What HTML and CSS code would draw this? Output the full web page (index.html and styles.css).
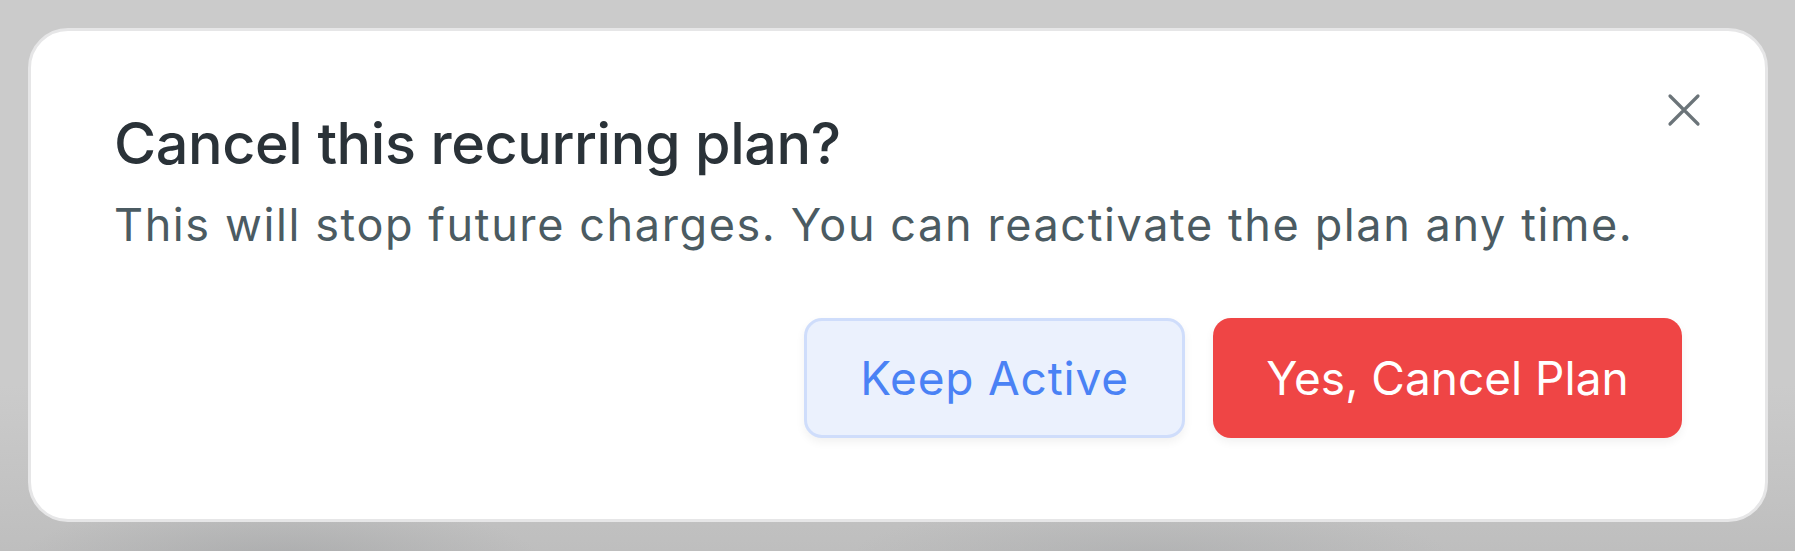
FILE: index.html
```html
<!DOCTYPE html>
<html lang="en">
<head>
    <meta charset="UTF-8">
    <meta name="viewport" content="width=device-width, initial-scale=1.0">
    <title>Cancel plan</title>
    <link rel="stylesheet" href="styles.css">
</head>
<body>
    <div class="backdrop">
        <div class="dialog" role="dialog" aria-labelledby="dialogTitle">
            <button class="close-button" aria-label="Close">
                <svg width="34" height="34" viewBox="0 0 34 34" fill="none">
                    <path d="M3 3 L31 31 M31 3 L3 31" stroke="currentColor" stroke-width="3.2" stroke-linecap="round"/>
                </svg>
            </button>

            <h2 class="dialog-title" id="dialogTitle">Cancel this recurring plan?</h2>
            <p class="dialog-text">This will stop future charges. You can reactivate the plan any time.</p>

            <div class="dialog-actions">
                <button class="button button-keep">Keep Active</button>
                <button class="button button-cancel">Yes, Cancel Plan</button>
            </div>
        </div>
    </div>
</body>
</html>
```

FILE: styles.css
```css
body {
    margin: 0;
    height: 100vh;
    font-family: 'Inter', 'Liberation Sans', sans-serif;
    background-color: #cbcbcb;
    overflow: hidden;
}

.backdrop {
    height: 100%;
    box-sizing: border-box;
    padding: 28px 27px 29px 28px;
    background:
        radial-gradient(ellipse 260px 60px at 280px 560px, rgba(150, 152, 154, 0.45), transparent),
        radial-gradient(ellipse 300px 50px at 1150px 555px, rgba(160, 162, 164, 0.4), transparent),
        linear-gradient(to bottom, #cbcbcb 70%, #bebebe 100%);
}

.dialog {
    position: relative;
    height: 100%;
    box-sizing: border-box;
    padding: 77px 83px 80px 83px;
    background-color: #ffffff;
    border: 3px solid #e6e6e7;
    border-radius: 40px;
    display: flex;
    flex-direction: column;
}

.close-button {
    position: absolute;
    top: 62px;
    right: 64px;
    padding: 0;
    border: none;
    background: none;
    color: #6b7479;
    cursor: pointer;
    display: flex;
}

.dialog-title {
    margin: 0;
    font-size: 57.5px;
    font-weight: 500;
    color: #2a3238;
    letter-spacing: -0.4px;
}

.dialog-text {
    margin: 19px 0 0 0;
    font-size: 45px;
    color: #4b5b62;
    letter-spacing: 1.6px;
}

.dialog-actions {
    margin-top: 66px;
    display: flex;
    justify-content: flex-end;
    gap: 28px;
}

.button {
    height: 120px;
    border-radius: 18px;
    font-family: 'Inter', 'Liberation Sans', sans-serif;
    font-size: 46px;
    cursor: pointer;
    box-shadow: 0 4px 10px rgba(0, 0, 0, 0.06);
}

.button-keep {
    width: 381px;
    background-color: #ebf1fd;
    border: 3px solid #cfddfb;
    color: #4a82f5;
    letter-spacing: 0.8px;
}

.button-cancel {
    width: 469px;
    background-color: #ef4545;
    border: none;
    color: #ffffff;
}
```
